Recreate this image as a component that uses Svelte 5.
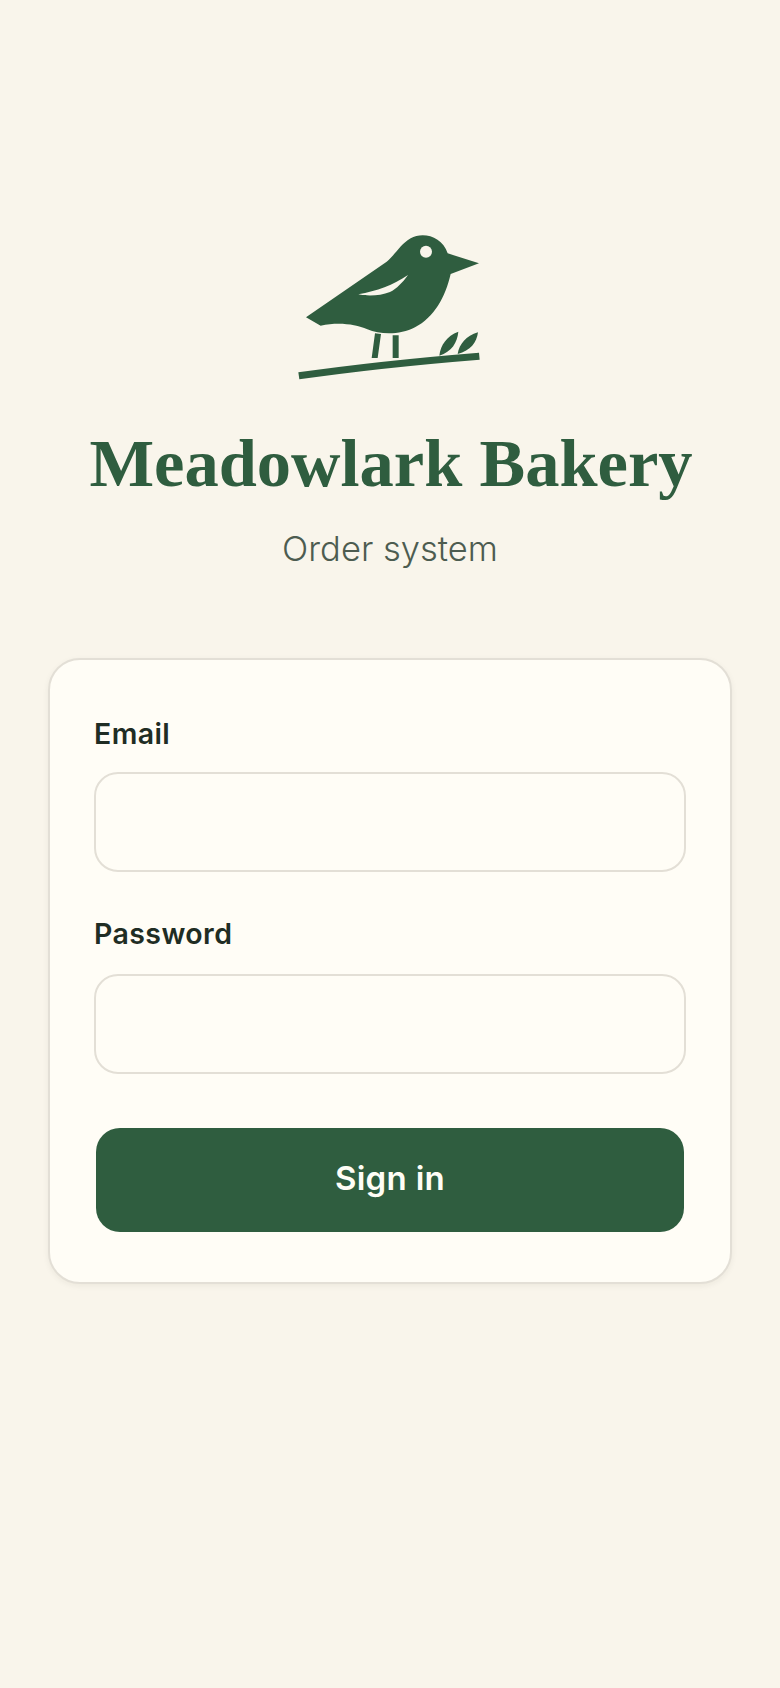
<script>
  let email = ''
  let password = ''
</script>

<main class="page">
  <header class="brand">
    <svg class="logo" viewBox="0 0 660 540" width="220" height="180" aria-hidden="true">
      <path class="ink" d="M78 322 L320 155 C345 135 362 102 392 85 C428 65 486 78 503 130 L597 160 L512 192 C496 262 462 322 405 352 C360 376 300 374 262 358 C225 342 175 336 122 347 Z" />
      <path class="paper" d="M235 253 C290 243 340 225 384 195 C368 218 350 236 330 246 C300 258 262 259 235 253 Z" />
      <circle class="paper" cx="438" cy="125" r="18" />
      <path class="ink" d="M285 370 L303 372 L293 444 L275 444 Z M338 376 H356 V444 H338 Z" />
      <path class="ink" d="M55 487 Q300 452 597 428 L599 449 Q300 473 58 508 Z" />
      <path class="ink" d="M478 437 C482 405 500 378 535 365 C532 398 515 425 478 437 Z M533 432 C538 402 558 378 594 367 C590 398 572 422 533 432 Z" />
    </svg>
    <h1>Meadowlark Bakery</h1>
    <p>Order system</p>
  </header>

  <form class="card" on:submit|preventDefault>
    <label for="email">Email</label>
    <input id="email" type="email" bind:value={email} />
    <label class="second" for="password">Password</label>
    <input id="password" type="password" bind:value={password} />
    <button type="submit">Sign in</button>
  </form>
</main>

<style>
  :global(body) { margin: 0; background: #f9f5eb; }
  .page {
    min-height: 1688px; box-sizing: border-box;
    padding: 210px 48px 0;
    font-family: Inter, "Liberation Sans", sans-serif;
  }
  .brand { display: flex; flex-direction: column; align-items: center; }
  .logo { display: block; }
  .ink { fill: #2f5d3f; }
  .paper { fill: #f9f5eb; }
  h1 {
    margin: 33px 0 0 2px;
    font-family: "Liberation Serif", serif;
    font-size: 68.5px; line-height: 80px; font-weight: 700;
    color: #2f5d3f; white-space: nowrap;
  }
  p {
    margin: 24px 0 0;
    font-size: 34.5px; line-height: 44px; font-weight: 300;
    color: #4d5c50;
  }
  .card {
    display: flex; flex-direction: column;
    margin-top: 87px; padding: 56px 44px 50px;
    background: #fffdf6;
    border: 2px solid #e3dfd6; border-radius: 32px;
    box-shadow: 0 2px 6px rgba(40, 40, 20, .06);
  }
  label {
    font-size: 28.5px; line-height: 36px; font-weight: 600;
    letter-spacing: .4px;
    color: #1f2d24;
    margin-bottom: 20px;
  }
  label.second { margin-top: -2px; margin-bottom: 22px; }
  input {
    box-sizing: border-box; width: 100%; height: 100px;
    margin: 0 0 46px; padding: 0 24px;
    background: transparent;
    border: 2px solid #e3dfd6; border-radius: 24px;
    font: inherit; font-size: 30px; color: #1f2d24;
    outline: none;
  }
  button {
    height: 104px; margin: 8px 2px 0; padding: 0 0 4px;
    background: #2f5d3f; color: #fffdf6;
    border: 0; border-radius: 24px;
    font: inherit; font-size: 33px; letter-spacing: .3px; font-weight: 600;
  }
</style>
